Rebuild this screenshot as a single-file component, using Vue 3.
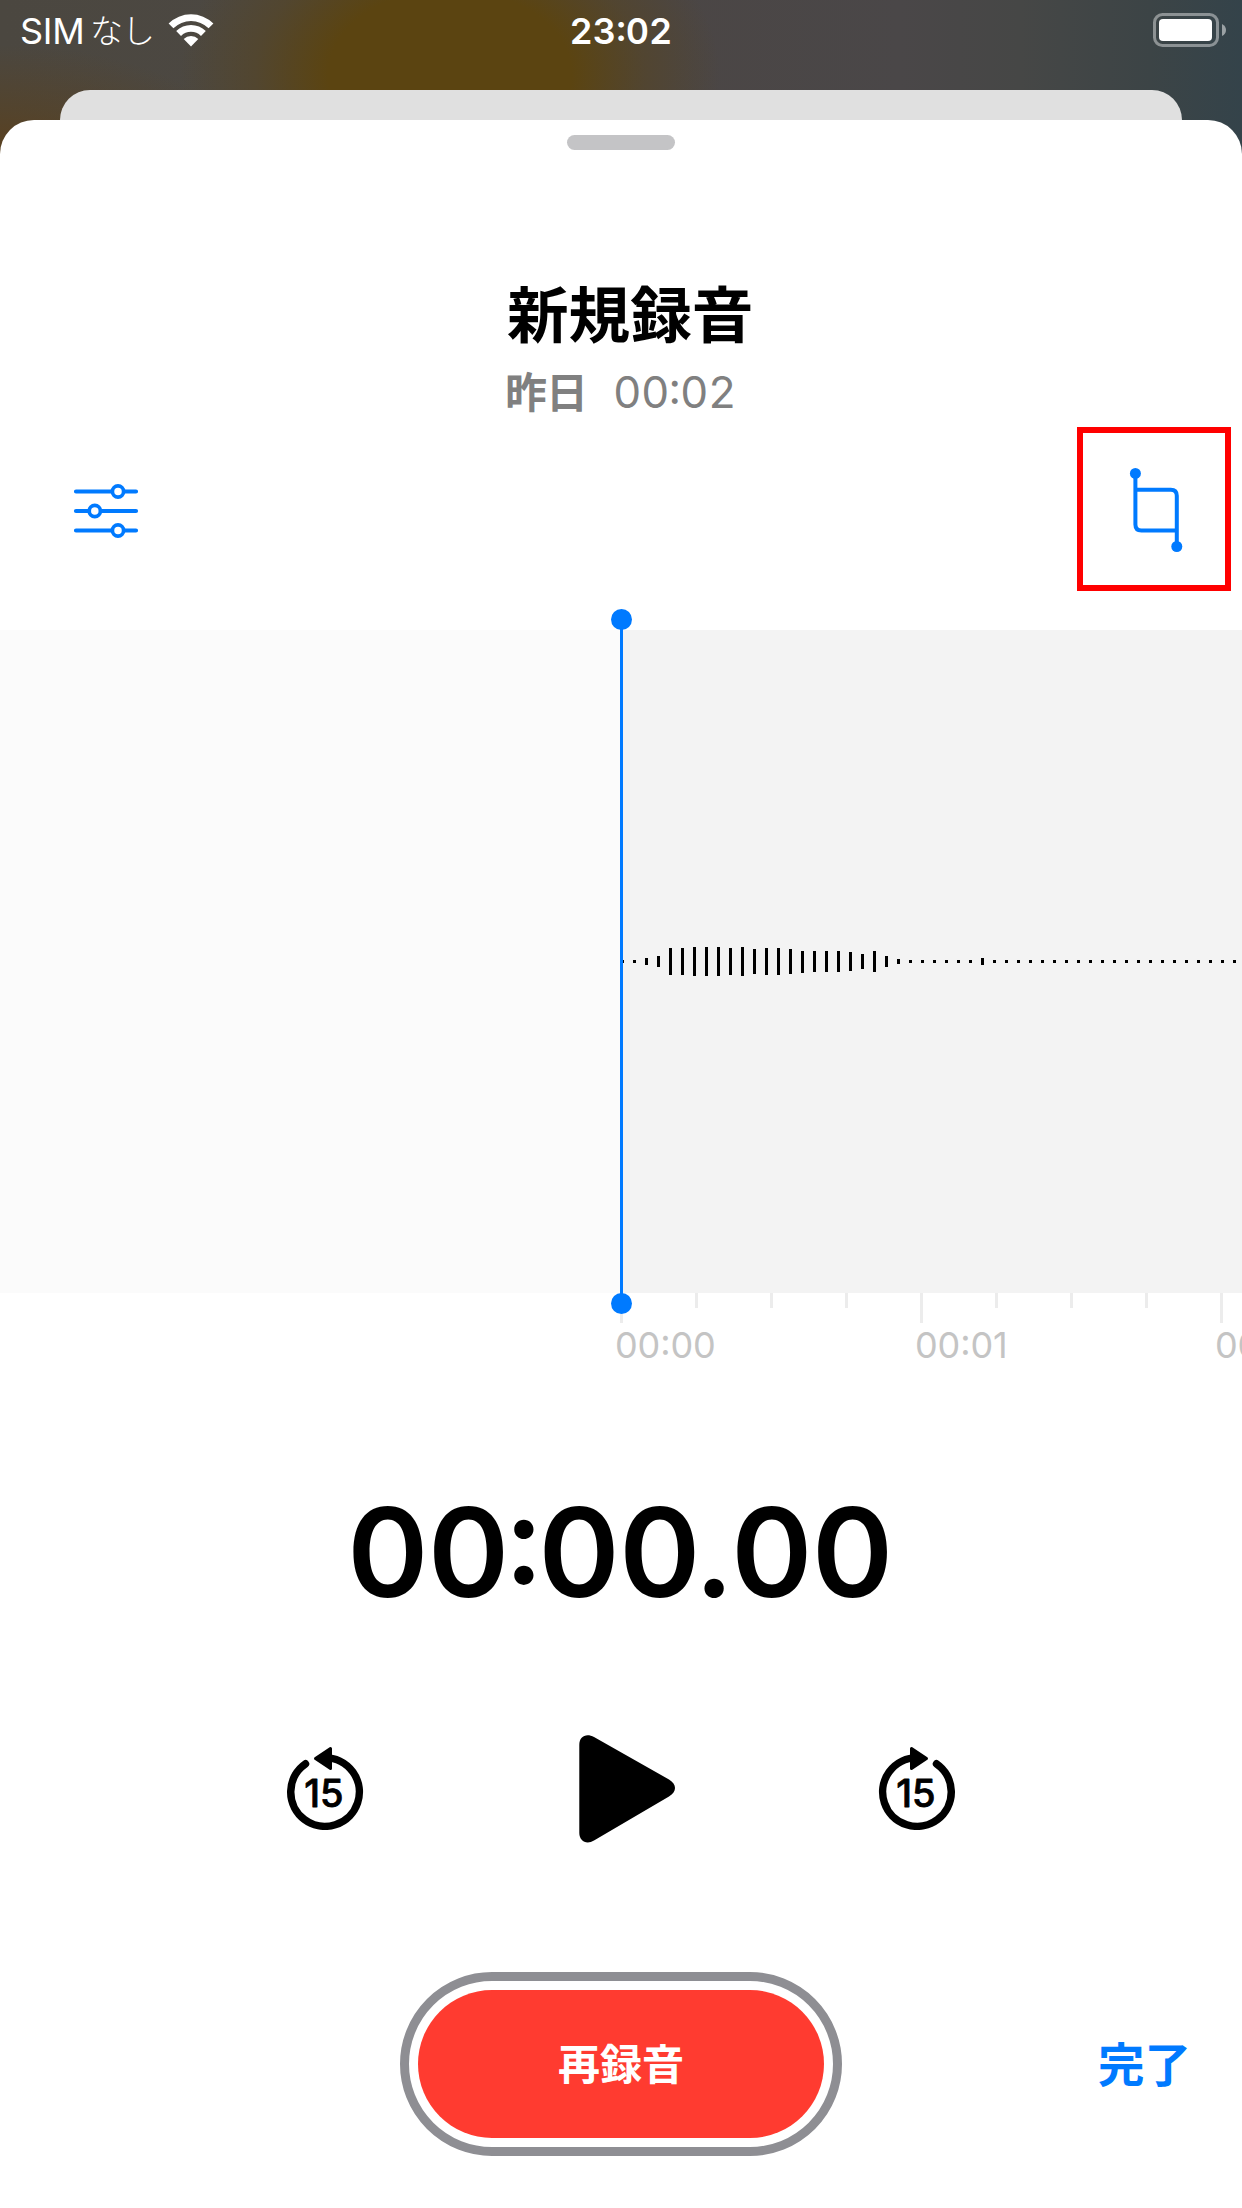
<script setup>
const levels = [3, 3, 7, 11, 27, 27, 29, 29, 29, 27, 29, 25, 27, 27, 25, 22, 21, 21, 21, 19, 15, 21, 11, 5]
const bars = Array.from({ length: 52 }, (_, i) => levels[i] ?? (i === 30 ? 7 : 3))
const seconds = ['00:00', '00:01', '00:02']
</script>

<template>
  <div class="screen">
    <header class="status">
      <div class="carrier">
        <span class="sim">SIM</span><span class="none">なし</span>
        <svg class="wifi" width="46" height="34" viewBox="0 0 46 34">
          <path d="M0.6 10.4A32 32 0 0 1 45.4 10.4L40.6 15.2A25.2 25.2 0 0 0 5.4 15.2Z" />
          <path d="M8.2 18.1A21 21 0 0 1 37.8 18.1L33 22.9A14.2 14.2 0 0 0 13 22.9Z" />
          <path d="M23 33.4L15.7 25.9A10.4 10.4 0 0 1 30.3 25.9Z" />
        </svg>
      </div>
      <div class="now">23:02</div>
      <svg class="battery" width="74" height="34" viewBox="0 0 74 34">
        <rect x="1.5" y="1.5" width="63" height="31" rx="8" fill="none" stroke="#fff" stroke-opacity=".42" stroke-width="3" />
        <rect x="6" y="6" width="53" height="22" rx="4" fill="#fff" />
        <path d="M69 11Q73 13 73 17Q73 21 69 23Z" fill="#fff" fill-opacity=".5" />
      </svg>
    </header>
    <div class="back-sheet"></div>
    <main class="sheet">
      <div class="grabber"></div>
      <h1>新規録音</h1>
      <div class="meta"><span class="day">昨日</span><span class="length">00:02</span></div>

      <div class="tools">
        <svg class="sliders" width="66" height="58" viewBox="0 0 66 58" fill="#fff" stroke="#007aff" stroke-linecap="round">
          <path d="M3 9.5H63M3 29H63M3 48.5H63" stroke-width="4.2" />
          <g stroke-width="3.7">
            <circle cx="45" cy="9.5" r="5.6" />
            <circle cx="21.8" cy="29" r="5.6" />
            <circle cx="45" cy="48.5" r="5.6" />
          </g>
        </svg>
        <div class="trim">
          <svg width="142" height="152" viewBox="1083 433 142 152" fill="none" stroke="#007aff" stroke-width="4">
            <path d="M1135.4 473.3V524.4Q1135.4 530.4 1141.4 530.4H1176.8" />
            <path d="M1176.8 546.5V495.7Q1176.8 489.7 1170.8 489.7H1135.4" />
            <g fill="#007aff" stroke="none">
              <circle cx="1135.4" cy="473.4" r="5.5" />
              <circle cx="1176.8" cy="546.5" r="5.5" />
            </g>
          </svg>
        </div>
      </div>

      <section class="wave">
        <div class="before"></div>
        <div class="audio">
          <i v-for="(h, i) in bars" :key="i" :style="{ height: h + 'px' }"></i>
        </div>
        <div class="playhead"></div>
      </section>

      <div class="ruler">
        <div v-for="s in seconds" :key="s" class="second">
          <div class="ticks"><i></i><i></i><i></i><i></i></div>
          <span>{{ s }}</span>
        </div>
      </div>

      <div class="clock">0<span class="colon">0:</span>0<span class="point">0.</span>00</div>

      <div class="controls">
        <svg class="skip" width="78" height="86" viewBox="0 0 78 86">
          <path d="M19.5 19.8A34.3 34.3 0 1 0 39 13.7" class="ring" />
          <path class="tip" d="M29.5 14.5L44.5 4.5V24.5Z" />
          <text x="37.9" y="63">15</text>
        </svg>
        <svg class="play" width="98" height="110" viewBox="0 0 98 110">
          <path d="M1.3 11C1.3 2 8.500 -1 16 3L91 45.500C99 50.500 99 57.500 91 62.500L16 106.500C8.500 111 1.300 107 1.300 99Z" />
        </svg>
        <svg class="skip" width="78" height="86" viewBox="0 0 78 86">
          <g transform="translate(78 0) scale(-1 1)">
            <path d="M19.5 19.8A34.3 34.3 0 1 0 39 13.7" class="ring" />
            <path class="tip" d="M29.5 14.5L44.5 4.5V24.5Z" />
          </g>
          <text x="37.9" y="63">15</text>
        </svg>
      </div>

      <footer>
        <button class="record"><span>再録音</span></button>
        <button class="done">完了</button>
      </footer>
    </main>
  </div>
</template>

<style>
body { margin: 0; }
</style>

<style scoped>
.screen {
  width: 1242px;
  height: 2208px;
  overflow: hidden;
  display: flex;
  flex-direction: column;
  font-family: Inter, "Noto Sans CJK JP", sans-serif;
  background:
    radial-gradient(ellipse 260px 130px at 0 175px, #5e3f18, #5a411d88 50%, transparent),
    radial-gradient(ellipse 270px 190px at 450px 75px, #5b4411 0 45%, #57441f88 72%, transparent),
    linear-gradient(90deg, #4b4740, #4c4842 260px, #4b4645 660px, #4a4748 900px, #464746 1020px, #3c4446 1150px, #34434a 1242px);
}
.status {
  height: 90px;
  flex: none;
  display: grid;
  grid-template-columns: 1fr 120px 1fr;
  color: #fff;
  line-height: 62px;
}
.carrier { display: flex; padding-left: 20px; }
.sim { width: 70px; font-size: 36px; letter-spacing: -0.3px; }
.none { width: 78px; font: 300 33px/59px "Noto Sans CJK JP", sans-serif; letter-spacing: -1px; }
.wifi { margin-top: 13px; fill: #fff; }
.now { font-size: 36px; font-weight: 600; text-align: center; font-feature-settings: "case", "tnum"; white-space: nowrap; }
.battery { justify-self: end; margin: 13px 15px 0 0; }
.back-sheet { flex: none; height: 30px; margin: 0 60px; border-radius: 30px 30px 0 0; background: #e0e0e0; }
.sheet { flex: 1; display: flex; flex-direction: column; background: #fff; border-radius: 34px 34px 0 0; }
.grabber { width: 108px; height: 15px; margin: 15px auto 0; border-radius: 7.5px; background: #c4c4c6; flex: none; }
h1 { margin: 117px 0 0 507px; font: 700 61.6px/90px "Noto Sans CJK JP", sans-serif; height: 90px; }
.meta { display: flex; height: 60px; margin: 5px 0 0 505px; color: #808080; line-height: 60px; }
.day { width: 108px; font-size: 42px; line-height: 55px; font-weight: 700; font-family: "Noto Sans CJK JP", sans-serif; letter-spacing: -1px; }
.length { font-size: 44px; font-weight: 400; letter-spacing: -0.6px; font-feature-settings: "case", "tnum"; }
.tools { display: flex; justify-content: space-between; height: 164px; margin: 5px 11px 0 73px; }
.sliders { margin-top: 55px; }
.trim { width: 142px; height: 152px; border: 6px solid #f00; }
.trim svg { display: block; }
.wave { position: relative; display: flex; height: 663px; margin-top: 39px; flex: none; }
.before { width: 621px; background: #fbfbfb; }
.audio { display: flex; flex: 1; align-items: center; gap: 9px; background: #f3f3f3; overflow: hidden; }
.audio i { flex: none; width: 3px; background: #000; }
.playhead { position: absolute; left: 620px; top: -3px; bottom: -3px; width: 3px; background: #007aff; z-index: 1; }
.playhead::before, .playhead::after { content: ""; position: absolute; left: -9px; width: 21px; height: 21px; border-radius: 50%; background: #007aff; }
.playhead::before { top: -18px; }
.playhead::after { bottom: -18px; }
.ruler { display: flex; height: 90px; padding-left: 620px; overflow: hidden; flex: none; }
.second { flex: none; width: 300px; }
.ticks { display: flex; gap: 72px; height: 30px; }
.ticks i { width: 3px; height: 15px; background: #ececec; }
.ticks i:first-child { height: 30px; }
.second span { display: block; margin-left: -5px; font-size: 36px; line-height: 45px; color: #c4c4c4; letter-spacing: -0.1px; font-feature-settings: "case"; }
.clock { height: 140px; margin-top: 98px; padding-right: 2px; text-align: center; font-size: 123px; font-weight: 600; line-height: 143px; letter-spacing: -0.4px; font-feature-settings: "case"; flex: none; }
.colon { letter-spacing: -5px; }
.point { letter-spacing: -2.5px; }
.controls { display: flex; height: 110px; margin: 112px 286px 0; justify-content: space-between; flex: none; }
.skip { margin-top: 11px; }
.play { margin: 1px 0 0 12px; }
.ring { fill: none; stroke: #000; stroke-width: 7.500; stroke-linecap: round; }
.tip { stroke: #000; stroke-width: 3; stroke-linejoin: round; }
.skip text { font-size: 38px; font-weight: 500; text-anchor: middle; stroke: #000; stroke-width: .8; stroke-linejoin: round; }
footer { display: grid; grid-template-columns: 400px 442px 400px; margin-top: 129px; align-items: center; }
button { padding: 0; margin: 0; border: 0; background: none; font-family: "Noto Sans CJK JP", sans-serif; font-weight: 700; }
.record { grid-column: 2; box-sizing: border-box; height: 184px; padding: 9px; border: 9px solid #8e8e93; border-radius: 92px; }
.record span { display: block; height: 148px; border-radius: 74px; background: #ff3b30; color: #fff; font-size: 42px; line-height: 144px; }
.done { grid-column: 3; justify-self: start; margin-left: 256px; color: #007aff; font-size: 46.500px; line-height: 66px; padding-bottom: 4px; }
</style>
